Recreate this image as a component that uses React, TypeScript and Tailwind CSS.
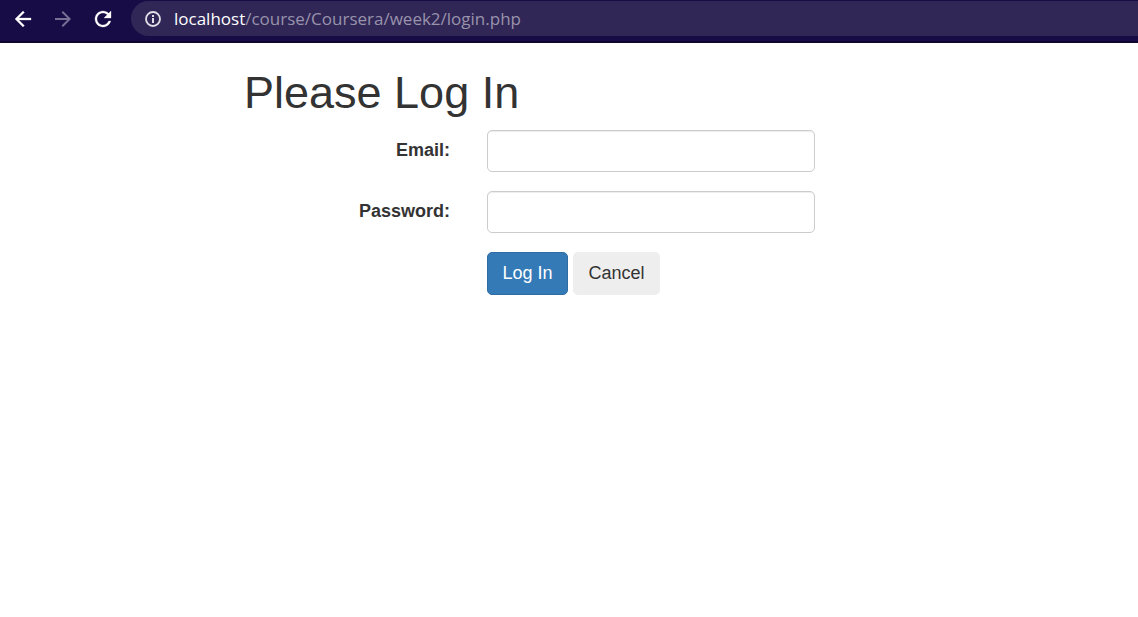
import type { ReactNode } from "react";

function Icon({ children, className }: { children: ReactNode; className: string }) {
  return (
    <svg viewBox="0 0 24 24" fill="currentColor" aria-hidden="true" className={className}>
      {children}
    </svg>
  );
}

function BrowserBar() {
  return (
    <header className="flex h-[43px] items-start border-b-2 border-[#12052f] bg-[#180c46] pt-px">
      <nav className="flex h-[35px] items-center gap-4 pl-[11px] text-white">
        <button type="button" aria-label="Back" className="block">
          <Icon className="size-6">
            <path
              d="M20 11H7.83l5.59-5.59L12 4l-8 8 8 8 1.41-1.41L7.83 13H20v-2z"
              stroke="currentColor"
              strokeWidth="0.3"
            />
          </Icon>
        </button>
        <button type="button" aria-label="Forward" className="block text-[#776f94]">
          <Icon className="size-6">
            <path d="M12 4l-1.41 1.41L16.17 11H4v2h12.17l-5.58 5.59L12 20l8-8-8-8z" />
          </Icon>
        </button>
        <button type="button" aria-label="Reload" className="block">
          <Icon className="size-6">
            <path
              d="M17.65 6.35C16.2 4.9 14.21 4 12 4c-4.42 0-7.99 3.58-7.99 8s3.57 8 7.99 8c3.73 0 6.84-2.55 7.73-6h-2.08c-.82 2.33-3.04 4-5.65 4-3.31 0-6-2.69-6-6s2.69-6 6-6c1.66 0 3.14.69 4.22 1.78L13 11h7V4l-2.35 2.35z"
              stroke="currentColor"
              strokeWidth="0.3"
            />
          </Icon>
        </button>
      </nav>
      <div className="ml-4 flex h-[35px] flex-1 items-center gap-[11px] rounded-l-full bg-[#302757] pl-3">
        <Icon className="size-5 shrink-0 text-[#e0dee6]">
          <circle cx="12" cy="12" r="8.4" fill="none" stroke="currentColor" strokeWidth="2.2" />
          <path d="M10.800 10.800h2.400v6h-2.400zM10.800 7.200h2.400v2.400h-2.400z" />
        </Icon>
        <p className="whitespace-nowrap font-['Open_Sans','Noto_Sans',sans-serif] text-[17px] leading-6 text-[#9993ab]">
          <span className="text-white">localhost</span>/course/Coursera/week2/login.php
        </p>
      </div>
    </header>
  );
}

function Field({ id, label, type }: { id: string; label: string; type: string }) {
  return (
    <div className="flex items-center">
      <label htmlFor={id} className="w-[206px] pb-px text-right font-bold">
        {label}
      </label>
      <input
        id={id}
        name={id}
        type={type}
        className="ml-[37px] h-[42px] w-[328px] rounded-[5px] border border-[#cccccc] bg-white px-4 shadow-[inset_0_1px_1px_rgba(0,0,0,0.075)] outline-none"
      />
    </div>
  );
}

export default function App() {
  return (
    <div className="min-h-screen bg-white font-['Liberation_Sans',Arial,sans-serif] text-[18px] leading-[25px] text-[#333333]">
      <BrowserBar />
      <main className="pl-[244px] pt-[25px]">
        <h1 className="text-[45px] leading-[50px]">Please Log In</h1>
        <form className="mt-3 flex flex-col gap-[19px]" onSubmit={(e) => e.preventDefault()}>
          <Field id="email" label="Email:" type="text" />
          <Field id="password" label="Password:" type="password" />
          <div className="flex gap-[5px] pl-[243px]">
            <button
              type="submit"
              className="h-[43px] w-[81px] rounded-[5px] border border-[#2e6da4] bg-[#337ab7] text-white"
            >
              Log In
            </button>
            <button type="button" className="h-[43px] w-[87px] rounded-[5px] bg-[#eeeeee]">
              Cancel
            </button>
          </div>
        </form>
      </main>
    </div>
  );
}
